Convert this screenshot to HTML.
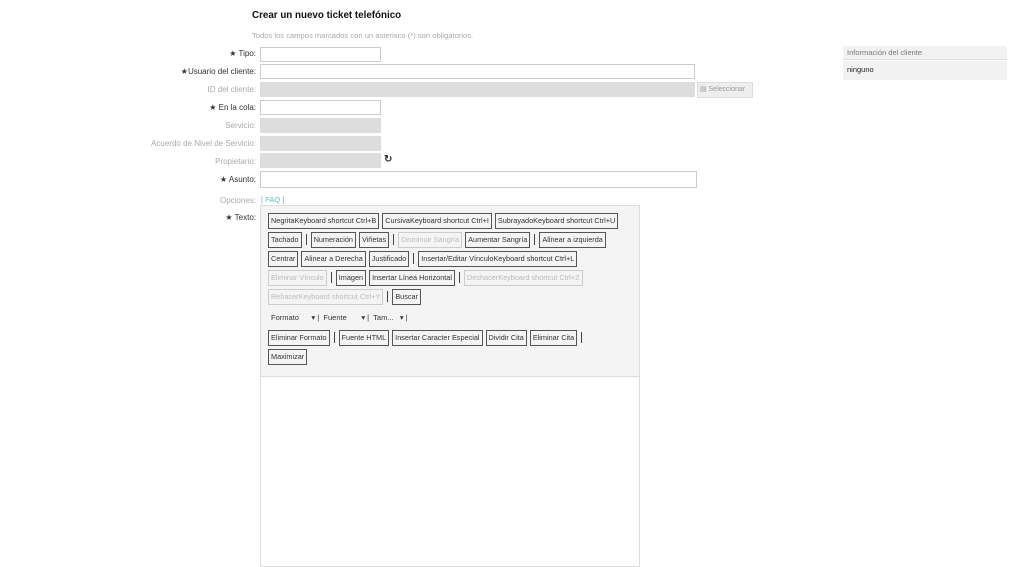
<!DOCTYPE html>
<html><head><meta charset="utf-8"><style>
body{margin:0;width:1024px;height:557px;background:#fff;font-family:"Liberation Sans",Arial,sans-serif;position:relative;overflow:hidden}
.a{position:absolute}
h1{position:absolute;left:252px;top:10px;margin:0;font-size:9.8px;font-weight:bold;color:#111}
.sub{left:252px;top:31px;font-size:7.6px;color:#aaa}
.l{position:absolute;right:768px;font-size:8px;color:#333;text-align:right;white-space:nowrap}
.l.g{color:#aaa}
.i{position:absolute;left:260px;height:13px;border:1px solid #ccc;background:#fff;box-sizing:content-box}
.i.d{background:#ddd;border-color:#ddd}
.ed{position:absolute;left:260px;top:205px;width:378px;height:360px;border:1px solid #ddd}
.tb{background:#f4f4f4;height:163px;padding:7px 4px 0 7px;border-bottom:1px solid #ddd;font-size:0;line-height:0}
.tb span{display:inline-block;font-size:7.3px;color:#333;border:1px solid #555;padding:3px 2px;margin:0 3px 3px 0;line-height:8px;background:#f4f4f4;white-space:nowrap;vertical-align:top}
.tb span.x{color:#bbb;border-color:#ccc}
.tb i{display:inline-block;width:1px;height:11px;background:#444;margin:2px 4px 0 1px;vertical-align:top}
.dd{font-size:7.5px;line-height:10px;color:#333;padding:5px 3px 7px 3px}
</style></head><body>
<h1>Crear un nuevo ticket telefónico</h1>
<div class="a sub">Todos los campos marcados con un asterisco (*) son obligatorios.</div>

<div class="l" style="top:49px">★ Tipo:</div><div class="i" style="top:47px;width:119px"></div>
<div class="l" style="top:67px">★Usuario del cliente:</div><div class="i" style="top:64px;width:433px"></div>
<div class="l g" style="top:85px">ID del cliente:</div><div class="i d" style="top:82px;width:433px"></div>
<div class="a" style="left:697px;top:82px;width:54px;height:14px;background:#eee;border:1px solid #ddd;font-size:7px;color:#999;line-height:14px">&nbsp;&#9636; Seleccionar</div>
<div class="l" style="top:103px">★ En la cola:</div><div class="i" style="top:100px;width:119px"></div>
<div class="l g" style="top:121px">Servicio:</div><div class="i d" style="top:118px;width:119px"></div>
<div class="l g" style="top:139px">Acuerdo de Nivel de Servicio:</div><div class="i d" style="top:136px;width:119px"></div>
<div class="l g" style="top:157px">Propietario:</div><div class="i d" style="top:153px;width:119px"></div>
<div class="a" style="left:384px;top:154px;font-size:10px;font-weight:bold;color:#333">&#x21bb;</div>
<div class="l" style="top:175px">★ Asunto:</div><div class="i" style="top:171px;width:435px;height:15px"></div>
<div class="l g" style="top:196px">Opciones:</div><div class="a" style="left:261px;top:195px;font-size:7.5px;color:#6bc">[ FAQ ]</div>
<div class="l" style="top:213px">★ Texto:</div>

<div class="ed"><div class="tb">
<span>NegritaKeyboard shortcut Ctrl+B</span><span>CursivaKeyboard shortcut Ctrl+I</span><span>SubrayadoKeyboard shortcut Ctrl+U</span><br>
<span>Tachado</span><i></i><span>Numeración</span><span>Viñetas</span><i></i><span class="x">Disminuir Sangría</span><span>Aumentar Sangría</span><i></i><span>Alinear a izquierda</span><br>
<span>Centrar</span><span>Alinear a Derecha</span><span>Justificado</span><i></i><span>Insertar/Editar VínculoKeyboard shortcut Ctrl+L</span><br>
<span class="x">Eliminar Vínculo</span><i></i><span>Imagen</span><span>Insertar Línea Horizontal</span><i></i><span class="x">DeshacerKeyboard shortcut Ctrl+Z</span><br>
<span class="x">RehacerKeyboard shortcut Ctrl+Y</span><i></i><span>Buscar</span><br>
<div class="dd">Formato &nbsp;&nbsp;&nbsp;&nbsp;&nbsp;▾ |&nbsp; Fuente &nbsp;&nbsp;&nbsp;&nbsp;&nbsp;&nbsp;▾ |&nbsp; Tam... &nbsp;&nbsp;▾ |</div>
<span>Eliminar Formato</span><i></i><span>Fuente HTML</span><span>Insertar Caracter Especial</span><span>Dividir Cita</span><span>Eliminar Cita</span><i></i><br>
<span>Maximizar</span>
</div></div>

<div class="a" style="left:843px;top:46px;width:164px;height:14px;background:#f2f2f2;border-bottom:1px solid #ddd;font-size:7.5px;color:#777;line-height:14px;padding-left:4px;box-sizing:border-box">Información del cliente</div>
<div class="a" style="left:843px;top:61px;width:164px;height:19px;background:#f2f2f2;font-size:7.5px;color:#222;line-height:17px;padding-left:4px;box-sizing:border-box">ninguno</div>
</body></html>
